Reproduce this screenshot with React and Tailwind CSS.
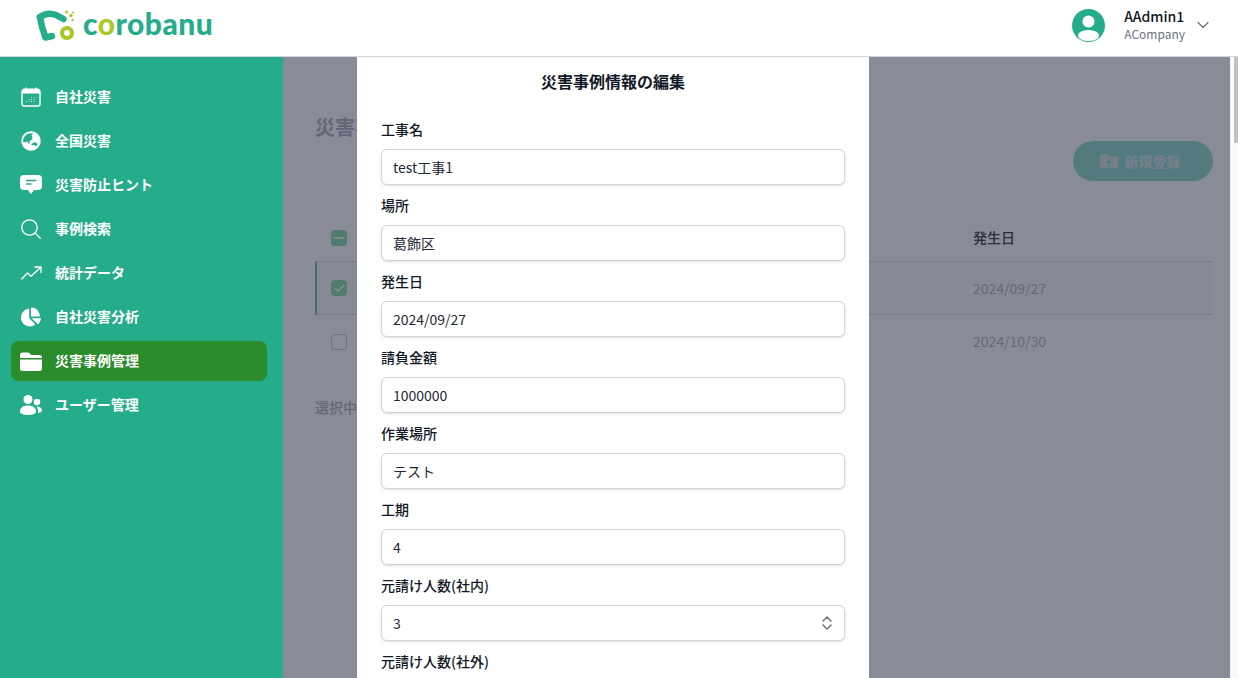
import React from "react";
import { FaGlobeAsia, FaChartPie, FaFolderPlus } from "react-icons/fa";
import { ChevronDown, Check, Minus } from "lucide-react";

const Calendar = () => (
  <svg width="20" height="20" viewBox="0 0 20 20" fill="none">
    <rect x="1" y="3" width="18" height="16" rx="2" stroke="white" strokeWidth="1.4" />
    <path d="M1 3.5a2 2 0 0 1 2-2h14a2 2 0 0 1 2 2V6.5H1z" fill="white" />
    <path d="M5 0.5v3M15 0.5v3" stroke="white" strokeWidth="1.4" />
    <path d="M5 14.5h1M7.5 14.5h1M7.5 12.5h1M10 14.5h1M10 12.5h1M10 10.5h1M12.5 12.5h1M12.5 14.5h1M12.5 10.5h1M15 10.5h.6" stroke="white" strokeOpacity=".75" strokeWidth="1" />
  </svg>
);
const Comment = () => (
  <svg width="22" height="20" viewBox="0 0 22 20">
    <path d="M4 0h14a4 4 0 0 1 4 4v7a4 4 0 0 1-4 4h-4l-2.600 3.600a.6.6 0 0 1-1 0L8 15H4a4 4 0 0 1-4-4V4a4 4 0 0 1 4-4z" fill="white" />
    <path d="M6 5.600h10.500M6 9h5.500" stroke="#25ad8b" strokeWidth="1.5" />
  </svg>
);
const Search = () => (
  <svg width="20" height="20" viewBox="0 0 20 20" fill="none" stroke="white" strokeWidth="1.3">
    <circle cx="8.500" cy="8.500" r="7.700" />
    <path d="M14 14l5.500 5.500" strokeLinecap="round" />
  </svg>
);
const Trend = () => (
  <svg width="21" height="14" viewBox="0 0 21 14" fill="none" stroke="white" strokeWidth="1.3" strokeLinecap="round" strokeLinejoin="round">
    <path d="M.7 13l5.800-6 3.500 3.300L19.500 1.500" />
    <path d="M14 1h6v5.500" />
  </svg>
);
const Folder = () => (
  <svg width="22" height="19" viewBox="0 0 22 19" fill="white">
    <path d="M0 3a2.500 2.500 0 0 1 2.500-2.500h5.300c.8 0 1.500.4 2 1l1.400 1.500h8.300A2.500 2.500 0 0 1 22 5.500v.6H0z" />
    <path d="M0 7.500h22v9a2.500 2.500 0 0 1-2.500 2.500h-17A2.500 2.500 0 0 1 0 16.500z" />
  </svg>
);
const Users = () => (
  <svg width="22" height="20" viewBox="0 0 22 20" fill="white">
    <circle cx="8" cy="4.500" r="4.500" />
    <circle cx="17" cy="7" r="3.200" />
    <path d="M0 16.500C0 12.500 3.500 10.500 8 10.500s8 2 8 6c0 2-3.500 3.500-8 3.500s-8-1.500-8-3.500z" />
    <path d="M16.500 11.500c3 0 5.500 1.300 5.500 4 0 1.300-1.500 2.200-4 2.400.3-2.600-.3-4.800-1.500-6.400z" />
  </svg>
);
const Avatar = () => (
  <svg width="33" height="33" viewBox="0 0 33 33">
    <defs><clipPath id="av"><circle cx="16.500" cy="16.500" r="16.500" /></clipPath></defs>
    <circle cx="16.500" cy="16.500" r="16.500" fill="#25ad8b" />
    <circle cx="16.500" cy="12.500" r="6" fill="white" />
    <g clipPath="url(#av)"><ellipse cx="16.500" cy="26.500" rx="10.500" ry="5.500" fill="white" /></g>
  </svg>
);
const Logo = () => (
  <div className="flex items-center">
    <svg width="48" height="33" viewBox="0 0 48 33" fill="none">
      <path d="M5 8C10 4.500 16 4 21 6L28.500 10" stroke="#25ad8b" strokeWidth="6.500" strokeLinecap="round" />
      <path d="M5 8C6 15 8 22 10.500 28.500L17 27" stroke="#25ad8b" strokeWidth="6.500" strokeLinecap="round" strokeLinejoin="round" />
      <circle cx="32" cy="24" r="5" stroke="#a8c927" strokeWidth="4.200" />
      <circle cx="31.500" cy="3" r="1.500" fill="#a8c927" />
      <circle cx="36" cy="6.500" r="1.700" fill="#a8c927" />
      <circle cx="38" cy="3.500" r="1" fill="#a8c927" />
      <circle cx="37.500" cy="11" r="1.200" fill="#a8c927" />
    </svg>
    <span className="mb-1 text-[30px] leading-none font-black tracking-[0.5px] text-[#25ad8b] [font-family:Lato,sans-serif]">
      c<span className="text-[#a8c927]">o</span>robanu
    </span>
  </div>
);

const nav = [
  [<Calendar />, "自社災害"],
  [<FaGlobeAsia size={20} color="white" />, "全国災害"],
  [<Comment />, "災害防止ヒント"],
  [<Search />, "事例検索"],
  [<Trend />, "統計データ"],
  [<FaChartPie size={20} color="white" />, "自社災害分析"],
  [<Folder />, "災害事例管理", true],
  [<Users />, "ユーザー管理"],
];

const fields = [
  ["工事名", "test工事1"],
  ["場所", "葛飾区"],
  ["発生日", "2024/09/27"],
  ["請負金額", "1000000"],
  ["作業場所", "テスト"],
  ["工期", "4"],
];

const inputCls =
  "block w-full h-9 rounded-md border border-[#d1d5db] bg-white px-[11px] text-sm text-[#1f2937] shadow-sm outline-none";
const labelCls = "block h-5 text-sm leading-[18px] font-medium text-[#111827]";

export default function App() {
  return (
    <div className="h-screen w-full overflow-hidden flex flex-col bg-white [font-family:'Noto_Sans_CJK_JP',sans-serif]">
      <header className="h-[57px] shrink-0 border-b border-[#d1d5db] bg-white flex items-center justify-between pl-[35px] pr-[25px] pb-[6px]">
        <Logo />
        <div className="flex items-center">
          <Avatar />
          <div className="ml-[19px] flex flex-col">
            <span className="text-sm leading-[18px] font-medium text-[#111827]">AAdmin1</span>
            <span className="text-xs leading-[18px] text-[#6b7280]">ACompany</span>
          </div>
          <ChevronDown size={20} strokeWidth={1.5} className="ml-2 text-[#6b7280]" />
        </div>
      </header>
      <div className="flex-1 flex min-h-0">
        <aside className="w-[283px] shrink-0 bg-[#25ad8b] pl-[11px] pr-4 pt-5 flex flex-col gap-1">
          {nav.map(([icon, label, active]) => (
            <div key={label} className={`h-10 flex items-center rounded-lg ${active ? "bg-[#2a8c2a]" : ""}`}>
              <div className="w-11 pl-2 pr-3 flex justify-center items-center shrink-0">{icon}</div>
              <span className="text-sm font-bold text-white pb-[2px]">{label}</span>
            </div>
          ))}
        </aside>
        <div className="flex-1 relative min-w-0">
          <main className="h-full pl-8 pr-[17px] bg-white">
            <h1 className="pt-[56px] text-xl leading-7 font-bold text-[#b0b3bf]">災害事</h1>
            <div className="flex justify-end">
              <button className="h-10 w-[140px] rounded-full bg-[#92dccf] flex items-center justify-center gap-[7px] pr-[6px] text-sm font-bold text-[#dbe4e6]">
                <FaFolderPlus size={18} />
                新規登録
              </button>
            </div>
            <div className="mt-[33px] text-sm">
              <div className="h-12 flex items-center border-b border-[#dadce3]">
                <span className="ml-4 size-4 rounded-[4px] bg-[#8fdcae] flex items-center justify-center text-white">
                  <Minus size={16} strokeWidth={2.5} />
                </span>
                <span className="ml-[626px] pb-[2px] font-medium text-[#3f4454]">発生日</span>
              </div>
              <div className="h-[53px] flex items-center border-b border-l-2 border-[#dadce3] border-l-[#5fc5b0] bg-[#f9fafb]">
                <span className="ml-[14px] size-4 rounded-[4px] bg-[#8fdcae] flex items-center justify-center text-white">
                  <Check size={13} strokeWidth={3} />
                </span>
                <span className="ml-[626px] text-[#b5b9c4]">2024/09/27</span>
              </div>
              <div className="h-[53px] flex items-center">
                <span className="ml-4 size-4 rounded-[4px] border border-[#c9cbd3] bg-white" />
                <span className="ml-[626px] pb-[2px] text-[#b5b9c4]">2024/10/30</span>
              </div>
            </div>
            <p className="mt-[29px] text-sm font-medium text-[#b0b3bf]">選択中</p>
          </main>
          <div className="absolute inset-0 bg-[#141a2e]/50" />
          <div className="absolute inset-y-0 left-[74px] w-[512px] bg-white px-6 pt-[13px] overflow-hidden">
            <h2 className="h-6 text-center text-base leading-[22px] font-bold text-[#111827] mb-[26px]">災害事例情報の編集</h2>
            {fields.map(([l, v]) => (
              <div key={l} className="mb-[11px]">
                <label className={`${labelCls} mb-[9px]`}>{l}</label>
                <input readOnly value={v} className={inputCls} />
              </div>
            ))}
            <div className="mb-[11px]">
              <label className={`${labelCls} mb-[9px]`}>元請け人数(社内)</label>
              <div className="relative">
                <select defaultValue="3" className={`${inputCls} appearance-none`}>
                  <option>3</option>
                </select>
                <svg width="10" height="14" viewBox="0 0 10 14" fill="none" stroke="#6b7280" strokeWidth="1.500" strokeLinecap="round" strokeLinejoin="round" className="absolute right-[13px] top-[11px] pointer-events-none">
                  <path d="M1 5l4-4 4 4M1 9l4 4 4-4" />
                </svg>
              </div>
            </div>
            <label className={labelCls}>元請け人数(社外)</label>
          </div>
        </div>
        <div className="w-2 shrink-0 bg-[#fafafa] border-l border-[#f0f0f0] flex justify-end">
          <div className="w-1 h-[86px] bg-[#c1c1c1]" />
        </div>
      </div>
    </div>
  );
}
